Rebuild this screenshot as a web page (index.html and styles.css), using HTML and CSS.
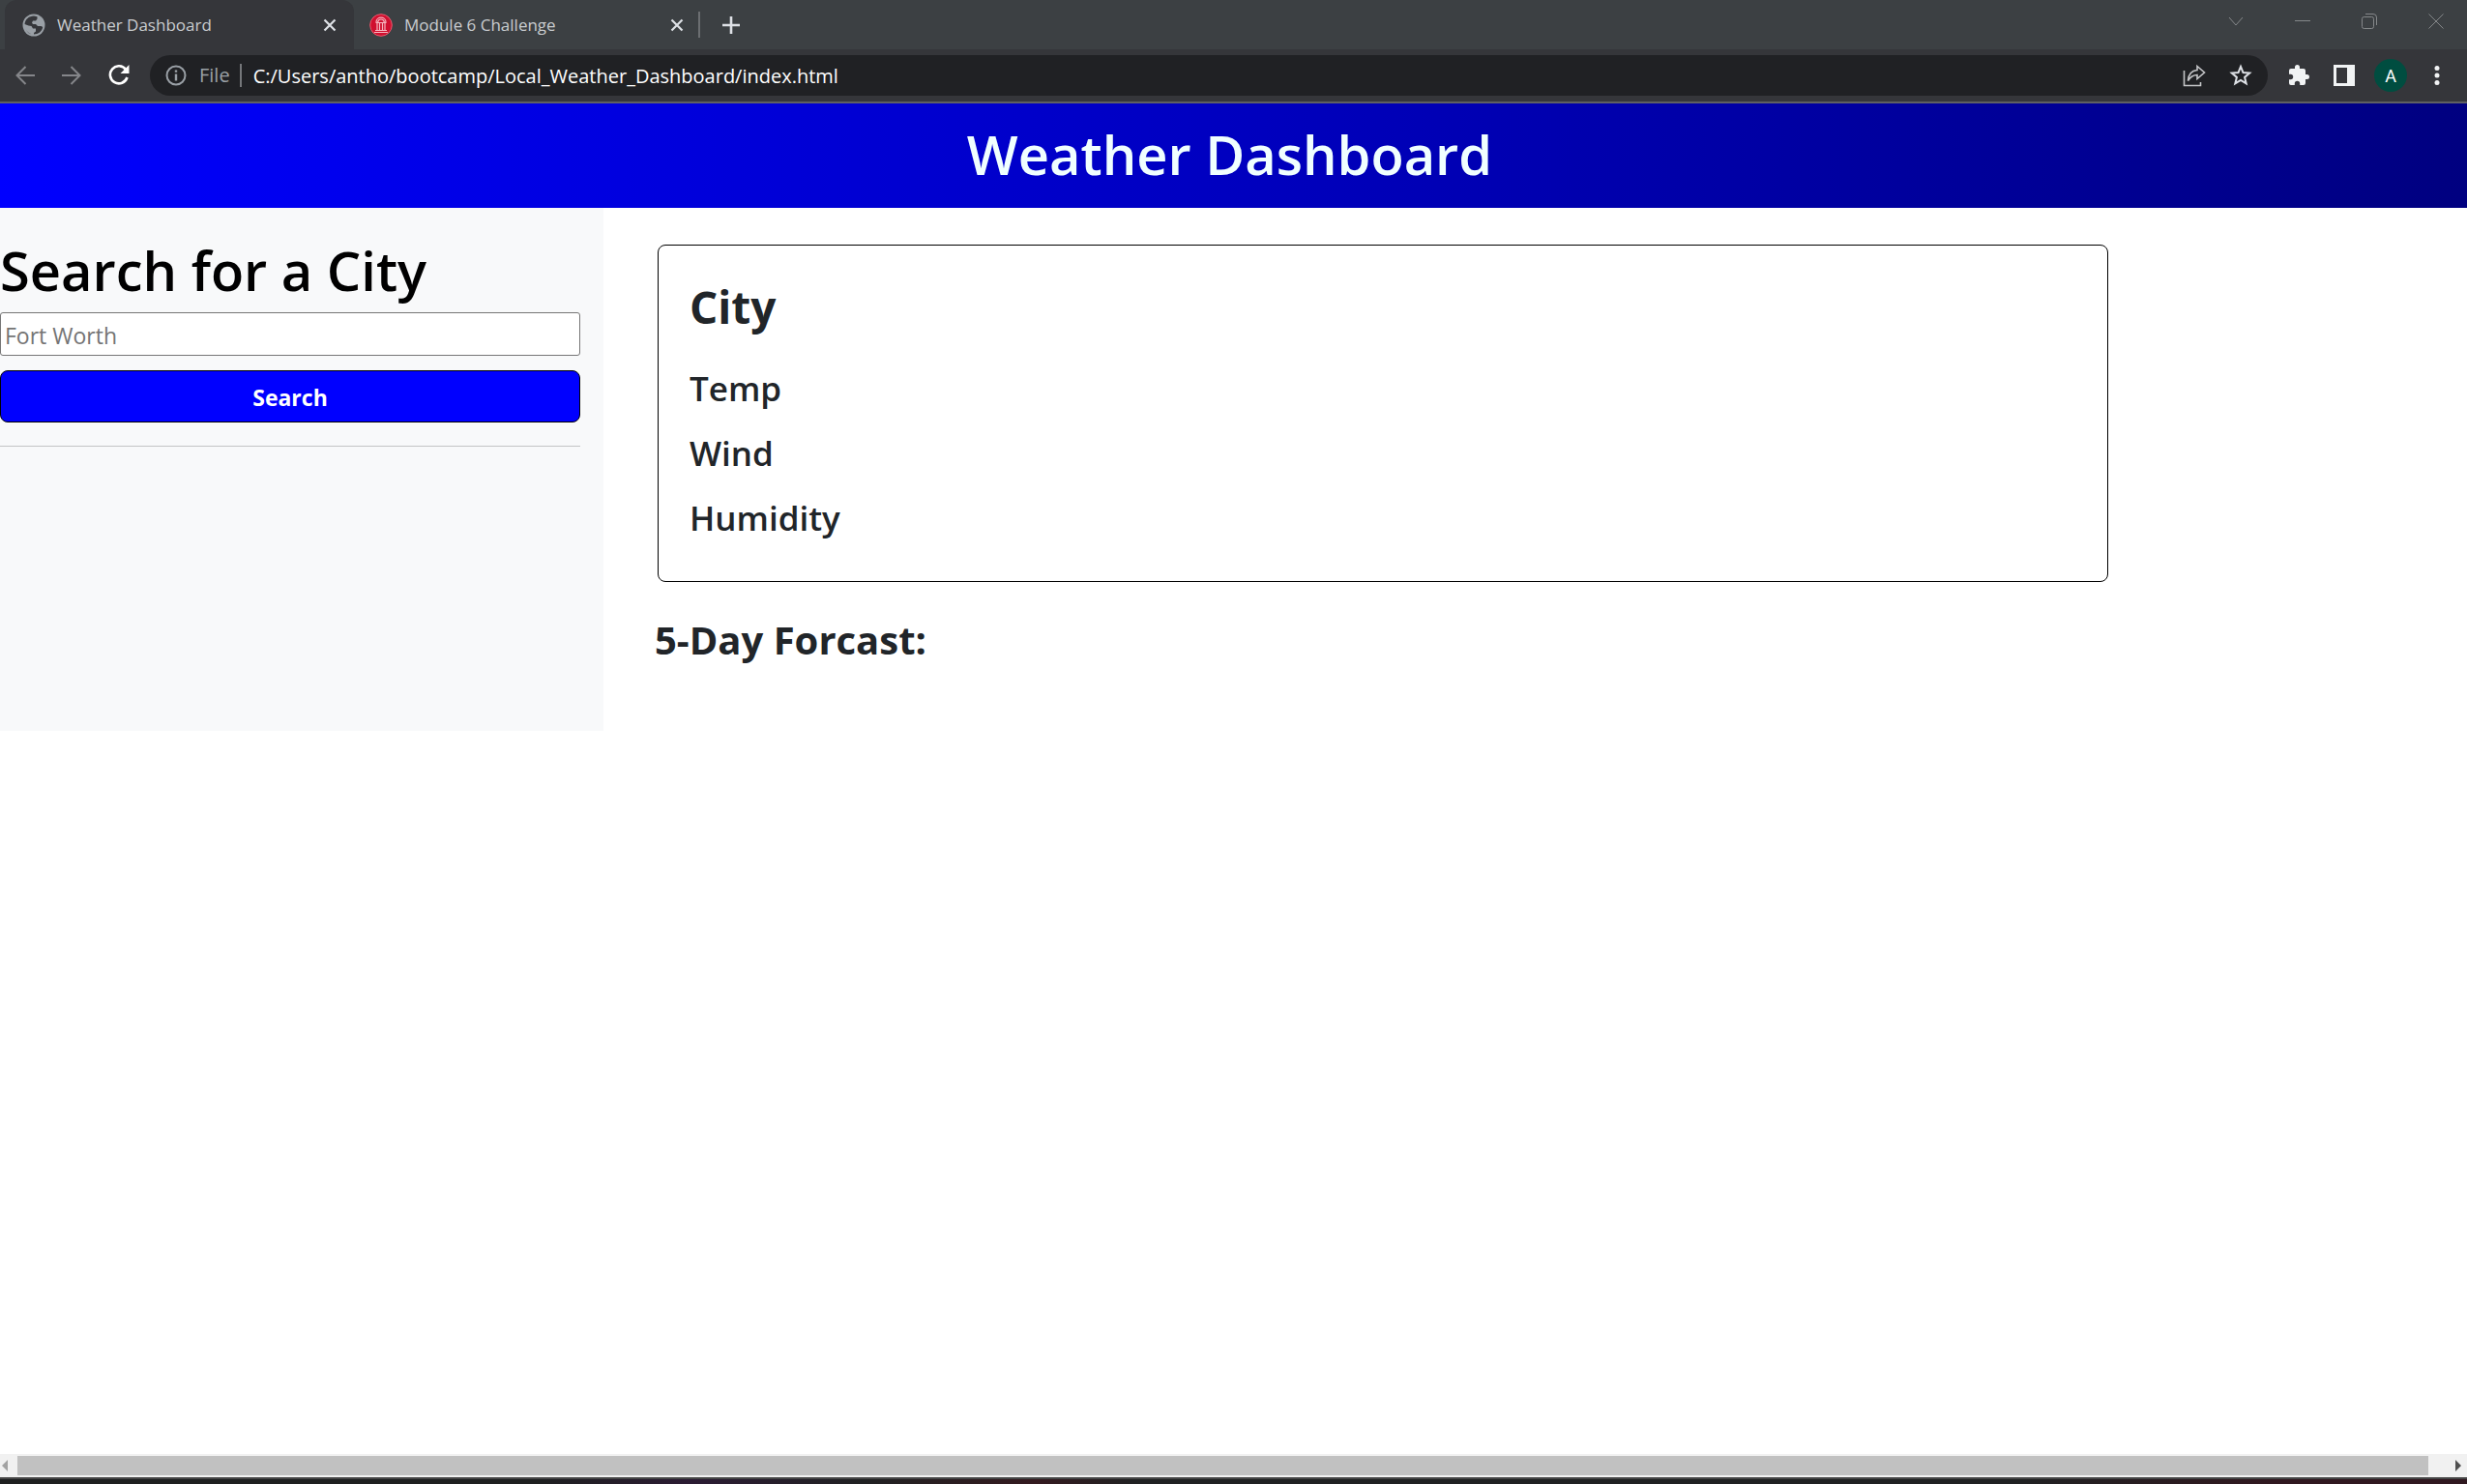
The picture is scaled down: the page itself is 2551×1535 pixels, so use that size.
FILE: index.html
```html
<!DOCTYPE html>
<html lang="en">
<head>
<meta charset="utf-8">
<title>Weather Dashboard</title>
<link rel="stylesheet" href="styles.css">
</head>
<body>
<div class="browser">
  <div class="tab-strip">
    <div class="tab tab-active">
      <svg class="favicon" viewBox="0 0 24 24" aria-hidden="true"><circle cx="12" cy="12" r="11.5" fill="#9aa0a6"/><path d="M12 2.5C7 2.5 3 6 2.5 11l4 1.500 3 .5 1.500 2.500h3v3l-2 1.500v1.500a9.500 9.500 0 0 1-8.500-5.500 9 9 0 0 0 8.500 5.500c4.500 0 8.500-3 9.300-7.500l-1.800-1h-3.500l-2-2h-3l-1-1.500 1-2h3l1.500-2V3.200z" fill="#35363a"/></svg>
      <span class="tab-title">Weather Dashboard</span>
      <button class="icon-button" aria-label="Close tab"><svg width="14" height="14" viewBox="0 0 14 14"><path d="M1.500 1.500l11 11M12.500 1.500l-11 11" stroke="#dee1e6" stroke-width="2.200"/></svg></button>
    </div>
    <div class="tab">
      <svg class="favicon" viewBox="0 0 24 24" aria-hidden="true"><circle cx="12" cy="12" r="11.300" fill="#d00f2f" stroke="#ec5c70" stroke-width="1"/><path d="M7 9c0-6.500 10-6.500 10 0M8.500 9c1-4 6-4 7 0M6.500 9.500h11M8 10v7M10.500 10v7M13.500 10v7M16 10v7M6 17.500h12M5 19.500h14" fill="none" stroke="#f6b5bf" stroke-width="1.200"/></svg>
      <span class="tab-title">Module 6 Challenge</span>
      <button class="icon-button" aria-label="Close tab"><svg width="14" height="14" viewBox="0 0 14 14"><path d="M1.500 1.500l11 11M12.500 1.500l-11 11" stroke="#dee1e6" stroke-width="2.200"/></svg></button>
    </div>
    <button class="icon-button new-tab" aria-label="New tab"><svg width="18" height="18" viewBox="0 0 18 18"><path d="M9 0v18M0 9h18" stroke="#dee1e6" stroke-width="2.600"/></svg></button>
    <div class="window-controls">
      <button class="icon-button" aria-label="Search tabs"><svg width="16" height="16" viewBox="0 0 16 16"><path d="M1 4l7 8 7-8"/></svg></button>
      <button class="icon-button" aria-label="Minimize"><svg width="16" height="16" viewBox="0 0 16 16"><path d="M0 7.500h16"/></svg></button>
      <button class="icon-button" aria-label="Restore"><svg width="16" height="16" viewBox="0 0 16 16"><rect x=".5" y="3.500" width="12" height="12" rx="2"/><path d="M4 .5h8a3.500 3.500 0 0 1 3.500 3.500v8"/></svg></button>
      <button class="icon-button" aria-label="Close"><svg width="16" height="16" viewBox="0 0 16 16"><path d="M.5.5l15 15M15.500.5l-15 15"/></svg></button>
    </div>
  </div>

  <div class="toolbar">
    <button class="icon-button" aria-label="Back"><svg width="20" height="20" viewBox="0 0 20 20"><path d="M20 10H2M10.500 1L1.500 10l9 9" fill="none" stroke="#85868a" stroke-width="2"/></svg></button>
    <button class="icon-button" aria-label="Forward"><svg width="20" height="20" viewBox="0 0 20 20"><path d="M0 10h18M9.500 1l9 9-9 9" fill="none" stroke="#85868a" stroke-width="2"/></svg></button>
    <button class="icon-button" aria-label="Reload"><svg width="22" height="22" viewBox="0 0 22 22"><path d="M18.200 5A9 9 0 1 0 19.500 13" fill="none" stroke="#fff" stroke-width="2.600"/><path d="M21.500 0v9h-9z" fill="#fff"/></svg></button>
    <div class="address-bar">
      <svg width="22" height="22" viewBox="0 0 22 22" aria-hidden="true"><circle cx="11" cy="11" r="9.500" fill="none" stroke="#9aa0a6" stroke-width="2"/><path d="M11 5.500v2.300M11 9.500v7" stroke="#9aa0a6" stroke-width="2.400"/></svg>
      <label class="scheme" for="url">File</label>
      <input class="url" id="url" type="text" value="C:/Users/antho/bootcamp/Local_Weather_Dashboard/index.html">
      <button class="icon-button" aria-label="Share"><svg width="24" height="24" viewBox="0 0 24 24"><path d="M1.500 7v15.500h17V19M5.500 17.500C6 10.500 9.500 7 15 6.500V2.500L22.500 9 15 15.500v-4c-4.500 0-7 2-9.500 6z" fill="none" stroke="#c4c5c7" stroke-width="1.600"/></svg></button>
      <button class="icon-button" aria-label="Bookmark"><svg width="24" height="24" viewBox="0 0 24 24"><path d="M12 2.800l2.500 6.200 6.700.5-5.100 4.400 1.600 6.500L12 16.900l-5.700 3.500 1.600-6.500L2.800 9.500 9.500 9z" fill="none" stroke="#dee1e6" stroke-width="2"/></svg></button>
    </div>
    <div class="extensions">
      <button class="icon-button" aria-label="Extensions"><svg width="24" height="24" viewBox="0 0 24 24"><path d="M20.500 11H19V7a2 2 0 0 0-2-2h-4V3.500a2.500 2.500 0 0 0-5 0V5H4a2 2 0 0 0-2 2v3.800h1.500a2.700 2.700 0 0 1 0 5.400H2V20a2 2 0 0 0 2 2h3.800v-1.500a2.700 2.700 0 0 1 5.400 0V22H17a2 2 0 0 0 2-2v-4h1.500a2.500 2.500 0 0 0 0-5z" fill="#f1f3f4"/></svg></button>
      <button class="icon-button" aria-label="Side panel"><svg width="22" height="22" viewBox="0 0 22 22"><path d="M0 0h22v22H0zM3 3v16h11V3z" fill="#f1f3f4" fill-rule="evenodd"/></svg></button>
      <button class="avatar" aria-label="Profile">A</button>
      <button class="icon-button" aria-label="Menu"><svg width="6" height="20" viewBox="0 0 6 20"><circle cx="3" cy="2.500" r="2.500" fill="#f1f3f4"/><circle cx="3" cy="10" r="2.500" fill="#f1f3f4"/><circle cx="3" cy="17.500" r="2.500" fill="#f1f3f4"/></svg></button>
    </div>
  </div>

  <header class="banner"><h1>Weather Dashboard</h1></header>

  <main class="dashboard">
    <aside class="search-panel">
      <form class="search-form">
        <label class="search-label" for="city">Search for a City</label>
        <input class="search-input" id="city" type="text" placeholder="Fort Worth">
        <button class="search-button" type="button">Search</button>
      </form>
      <hr class="divider">
    </aside>
    <section class="results">
      <div class="current">
        <h2>City</h2>
        <p>Temp</p>
        <p>Wind</p>
        <p>Humidity</p>
      </div>
      <h3>5-Day Forcast:</h3>
    </section>
  </main>

  <div class="scrollbar">
    <svg width="6" height="12" viewBox="0 0 6 12" aria-hidden="true"><path d="M6 0v12L0 6z" fill="#a3a3a3"/></svg>
    <div class="scroll-thumb"></div>
    <svg width="6" height="12" viewBox="0 0 6 12" aria-hidden="true"><path d="M0 0v12l6-6z" fill="#505050"/></svg>
  </div>
  <div class="taskbar-edge"></div>
</div>
</body>
</html>
```
FILE: styles.css
```css
* { box-sizing: border-box; }

body {
  margin: 0;
  background: #fff;
  color: #212529;
  font-family: "Segoe UI", "Open Sans", "Noto Sans", sans-serif;
}

h1, h2, h3, p { margin: 0; }

button, input { font-family: inherit; }

svg { display: block; flex: none; }

.browser {
  display: flex;
  flex-direction: column;
  min-height: 100vh;
}

.icon-button {
  display: flex;
  padding: 0;
  border: 0;
  background: none;
}

/* Tab strip */
.tab-strip {
  display: flex;
  align-items: stretch;
  height: 51px;
  padding-left: 5px;
  background: #3c4043;
}

.tab {
  display: flex;
  align-items: center;
  gap: 12px;
  width: 358px;
  margin: 12px 0;
  padding: 0 15px 0 16px;
  border-right: 2px solid #6b6e71;
}

.tab-active {
  width: 361px;
  margin: 0;
  padding: 0 18px;
  border: 0;
  border-radius: 12px 12px 0 0;
  background: #35363a;
}

.favicon { width: 24px; height: 24px; }

.tab-title {
  flex: 1;
  color: #c9cccf;
  font-size: 17px;
}

.new-tab { align-self: center; margin-left: 23px; }

.window-controls {
  display: flex;
  align-items: center;
  gap: 53px;
  margin-left: auto;
  padding: 0 24px 8px 0;
}

.window-controls svg { fill: none; stroke: #85888a; }

/* Toolbar */
.toolbar {
  display: flex;
  align-items: center;
  gap: 28px;
  height: 56px;
  padding: 0 28px 0 16px;
  border-bottom: 2px solid #5f6063;
  background: #35363a;
}

.address-bar {
  display: flex;
  flex: 1;
  align-items: center;
  height: 42px;
  margin-left: -7px;
  padding: 0 16px;
  border-radius: 21px;
  background: #202124;
}

.scheme {
  margin-left: 13px;
  padding-right: 10px;
  border-right: 2px solid #75777a;
  color: #9aa0a6;
  font-size: 20px;
  line-height: 24px;
}

.url {
  flex: 1;
  padding: 0 0 0 12px;
  border: 0;
  background: none;
  color: #fff;
  font-size: 20px;
}

.address-bar .icon-button { margin-left: 24px; }

.extensions {
  display: flex;
  align-items: center;
  gap: 24px;
  margin-left: -8px;
}

.avatar {
  width: 34px;
  height: 34px;
  margin: 0 4px 0 -4px;
  padding: 0;
  border: 0;
  border-radius: 50%;
  background: #004d40;
  color: #fff;
  font: 18px Roboto, sans-serif;
}

/* Page */
.banner {
  padding: 0 8px 0 0;
  background: linear-gradient(to right, blue, navy);
  color: azure;
  text-align: center;
}

.banner h1 {
  padding: 16px 0 20px;
  font-size: 56px;
  font-weight: 600;
  line-height: 72px;
}

.dashboard {
  display: grid;
  flex: 1;
  grid-template-columns: 624fr 1927fr;
  align-items: start;
}

.search-panel {
  min-height: 541px;
  padding: 24px 24px 0 0;
  background: #f8f9fa;
}

.search-form { display: flex; flex-direction: column; }

.search-label {
  padding-bottom: 4px;
  color: #000;
  font-size: 56px;
  font-weight: 600;
  line-height: 80px;
}

.search-input {
  height: 45px;
  padding: 4px 4px 2px;
  border: 1px solid #767676;
  border-radius: 3px;
  font-size: 23px;
}

.search-input::placeholder { color: #757575; }

.search-button {
  height: 54px;
  margin-top: 15px;
  padding: 2px 0 0;
  border: 1px solid #000;
  border-radius: 8px;
  background: blue;
  color: #fff;
  font-size: 23px;
  font-weight: 700;
}

.divider {
  margin: 24px 0 0;
  border: 0;
  border-top: 1px solid #c3c4c5;
}

.results { padding: 38px 56px 0 53px; }

.current {
  max-width: 1500px;
  margin-left: 3px;
  padding: 32px;
  border: 1px solid #000;
  border-radius: 8px;
}

.current h2 {
  margin-bottom: 20px;
  font-size: 46px;
  font-weight: 700;
  line-height: 62px;
}

.current p {
  font-size: 35px;
  font-weight: 600;
  line-height: 67px;
}

.results h3 {
  margin-top: 30px;
  font-size: 40px;
  font-weight: 700;
  line-height: 60px;
}

/* Horizontal scrollbar and the strip below it */
.scrollbar {
  display: flex;
  align-items: center;
  gap: 10px;
  height: 24px;
  padding: 0 6px 0 2px;
  background: #f1f1f1;
}

.scroll-thumb {
  flex: 1;
  height: 20px;
  margin-right: 18px;
  background: #c1c1c1;
}

.taskbar-edge {
  height: 7px;
  border-top: 2px solid #454545;
  background: linear-gradient(to right, #1e1f20 22%, #2b1b33 28%, #202122 35%, #341a1f 42%, #202122 46%, #202122 82%, #30181f 92%);
}
```
